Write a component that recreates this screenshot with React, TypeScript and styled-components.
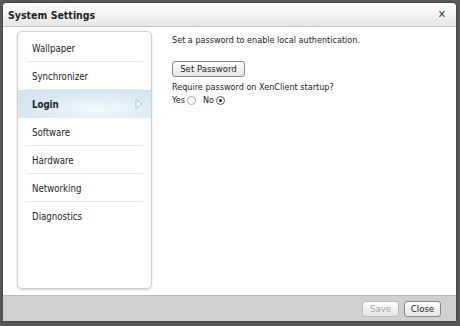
import React from "react";
import styled, { createGlobalStyle } from "styled-components";

const Global = createGlobalStyle`
  html, body {
    margin: 0;
    padding: 0;
    background: #595959;
  }
  body {
    font-family: "DejaVu Sans Condensed", "DejaVu Sans", Verdana, sans-serif;
    font-size: 9px;
    color: #222;
  }
`;

const Screen = styled.div`
  width: 460px;
  height: 326px;
  padding: 3px 4px 5px 3px;
  box-sizing: border-box;
  background: #595959;
`;

const Dialog = styled.div`
  height: 100%;
  display: flex;
  flex-direction: column;
  background: #fff;
  border-radius: 4px 4px 0 0;
  overflow: hidden;
  box-shadow: 0 0 3px rgba(0, 0, 0, 0.5);
`;

const TitleBar = styled.div`
  height: 23px;
  display: flex;
  align-items: center;
  justify-content: space-between;
  padding: 0 10px 0 5px;
  background: linear-gradient(#ffffff, #e6e6e6);
  border-bottom: 1px solid #c4c4c4;
`;

const Title = styled.div`
  font-weight: bold;
  font-size: 10.5px;
  color: #222;
`;

const CloseX = styled.div`
  font-weight: bold;
  font-size: 11px;
  color: #2d3a57;
`;

const Body = styled.div`
  flex: 1;
  display: flex;
  gap: 20px;
  padding: 4px 0 6px 14px;
`;

const Nav = styled.div`
  width: 133px;
  border: 1px solid #cfcfcf;
  border-radius: 5px;
  box-shadow: 0 1px 2px rgba(0, 0, 0, 0.2);
  padding-top: 2px;
  display: flex;
  flex-direction: column;
`;

const NavItem = styled.div<{ $active?: boolean; $last?: boolean }>`
  height: 28px;
  display: flex;
  align-items: center;
  justify-content: space-between;
  padding: 0 8px 0 14px;
  position: relative;
  font-weight: ${({ $active }) => ($active ? "bold" : "normal")};
  font-size: 9.6px;
  color: #1e1e1e;
  background: ${({ $active }) =>
    $active
      ? "radial-gradient(ellipse at 60% 70%, #f4f9fc 0%, #d7e8f3 60%, #cde2f0 100%)"
      : "transparent"};
  &:after {
    content: "";
    position: absolute;
    left: 8px;
    right: 8px;
    bottom: 0;
    border-bottom: 1px solid
      ${({ $last, $active }) => ($last || $active ? "transparent" : "#e8e8e8")};
  }
`;

const Content = styled.div`
  display: flex;
  flex-direction: column;
  padding-top: 3px;
  color: #222;
`;

const Line = styled.div<{ $mt?: number }>`
  margin-top: ${({ $mt }) => $mt ?? 0}px;
  line-height: 13px;
  white-space: nowrap;
`;

const Button = styled.button<{ $disabled?: boolean }>`
  font-family: inherit;
  font-size: 9.5px;
  height: 16px;
  padding: 0 8px;
  border: 1px solid ${({ $disabled }) => ($disabled ? "#bcbcbc" : "#888")};
  border-radius: 3px;
  background: linear-gradient(#ffffff, #e4e4e4);
  color: ${({ $disabled }) => ($disabled ? "#a8a8a8" : "#222")};
  line-height: 14px;
  white-space: nowrap;
`;

const SetButton = styled(Button)`
  align-self: flex-start;
  margin-top: 14px;
  width: 73px;
  padding: 0;
`;

const Radios = styled.div`
  display: flex;
  align-items: center;
  gap: 7px;
  margin-top: 1px;
`;

const RadioLabel = styled.label`
  display: flex;
  align-items: center;
  gap: 2px;
`;

const Radio = styled.span<{ $on?: boolean }>`
  width: 7px;
  height: 7px;
  border-radius: 50%;
  border: 1px solid ${({ $on }) => ($on ? "#555" : "#aaa")};
  background: #fff;
  display: inline-flex;
  align-items: center;
  justify-content: center;
  &:after {
    content: "";
    width: 3px;
    height: 3px;
    border-radius: 50%;
    background: ${({ $on }) => ($on ? "#111" : "transparent")};
  }
`;

const Footer = styled.div`
  height: 25px;
  border-top: 1px solid #b8b8b8;
  background: #d0d0d0;
  display: flex;
  align-items: center;
  justify-content: flex-end;
  gap: 5px;
  padding: 0 15px 0 0;
`;

const FooterButton = styled(Button)`
  width: 37px;
  padding: 0;
`;

const Arrow = () => (
  <svg width="8" height="12" viewBox="0 0 8 12">
    <path d="M1 1 L7 6 L1 11 Z" fill="#eef6fb" stroke="#9ec8e4" strokeWidth="1" />
  </svg>
);

const items = [
  "Wallpaper",
  "Synchronizer",
  "Login",
  "Software",
  "Hardware",
  "Networking",
  "Diagnostics",
];

export default function App() {
  return (
    <>
      <Global />
      <Screen>
        <Dialog>
          <TitleBar>
            <Title>System Settings</Title>
            <CloseX>✕</CloseX>
          </TitleBar>
          <Body>
            <Nav>
              {items.map((name, i) => (
                <NavItem
                  key={name}
                  $active={name === "Login"}
                  $last={i === items.length - 1}
                >
                  {name}
                  {name === "Login" && <Arrow />}
                </NavItem>
              ))}
            </Nav>
            <Content>
              <Line>Set a password to enable local authentication.</Line>
              <SetButton>Set Password</SetButton>
              <Line $mt={4}>Require password on XenClient startup?</Line>
              <Radios>
                <RadioLabel>
                  Yes <Radio />
                </RadioLabel>
                <RadioLabel>
                  No <Radio $on />
                </RadioLabel>
              </Radios>
            </Content>
          </Body>
          <Footer>
            <FooterButton $disabled>Save</FooterButton>
            <FooterButton>Close</FooterButton>
          </Footer>
        </Dialog>
      </Screen>
    </>
  );
}
